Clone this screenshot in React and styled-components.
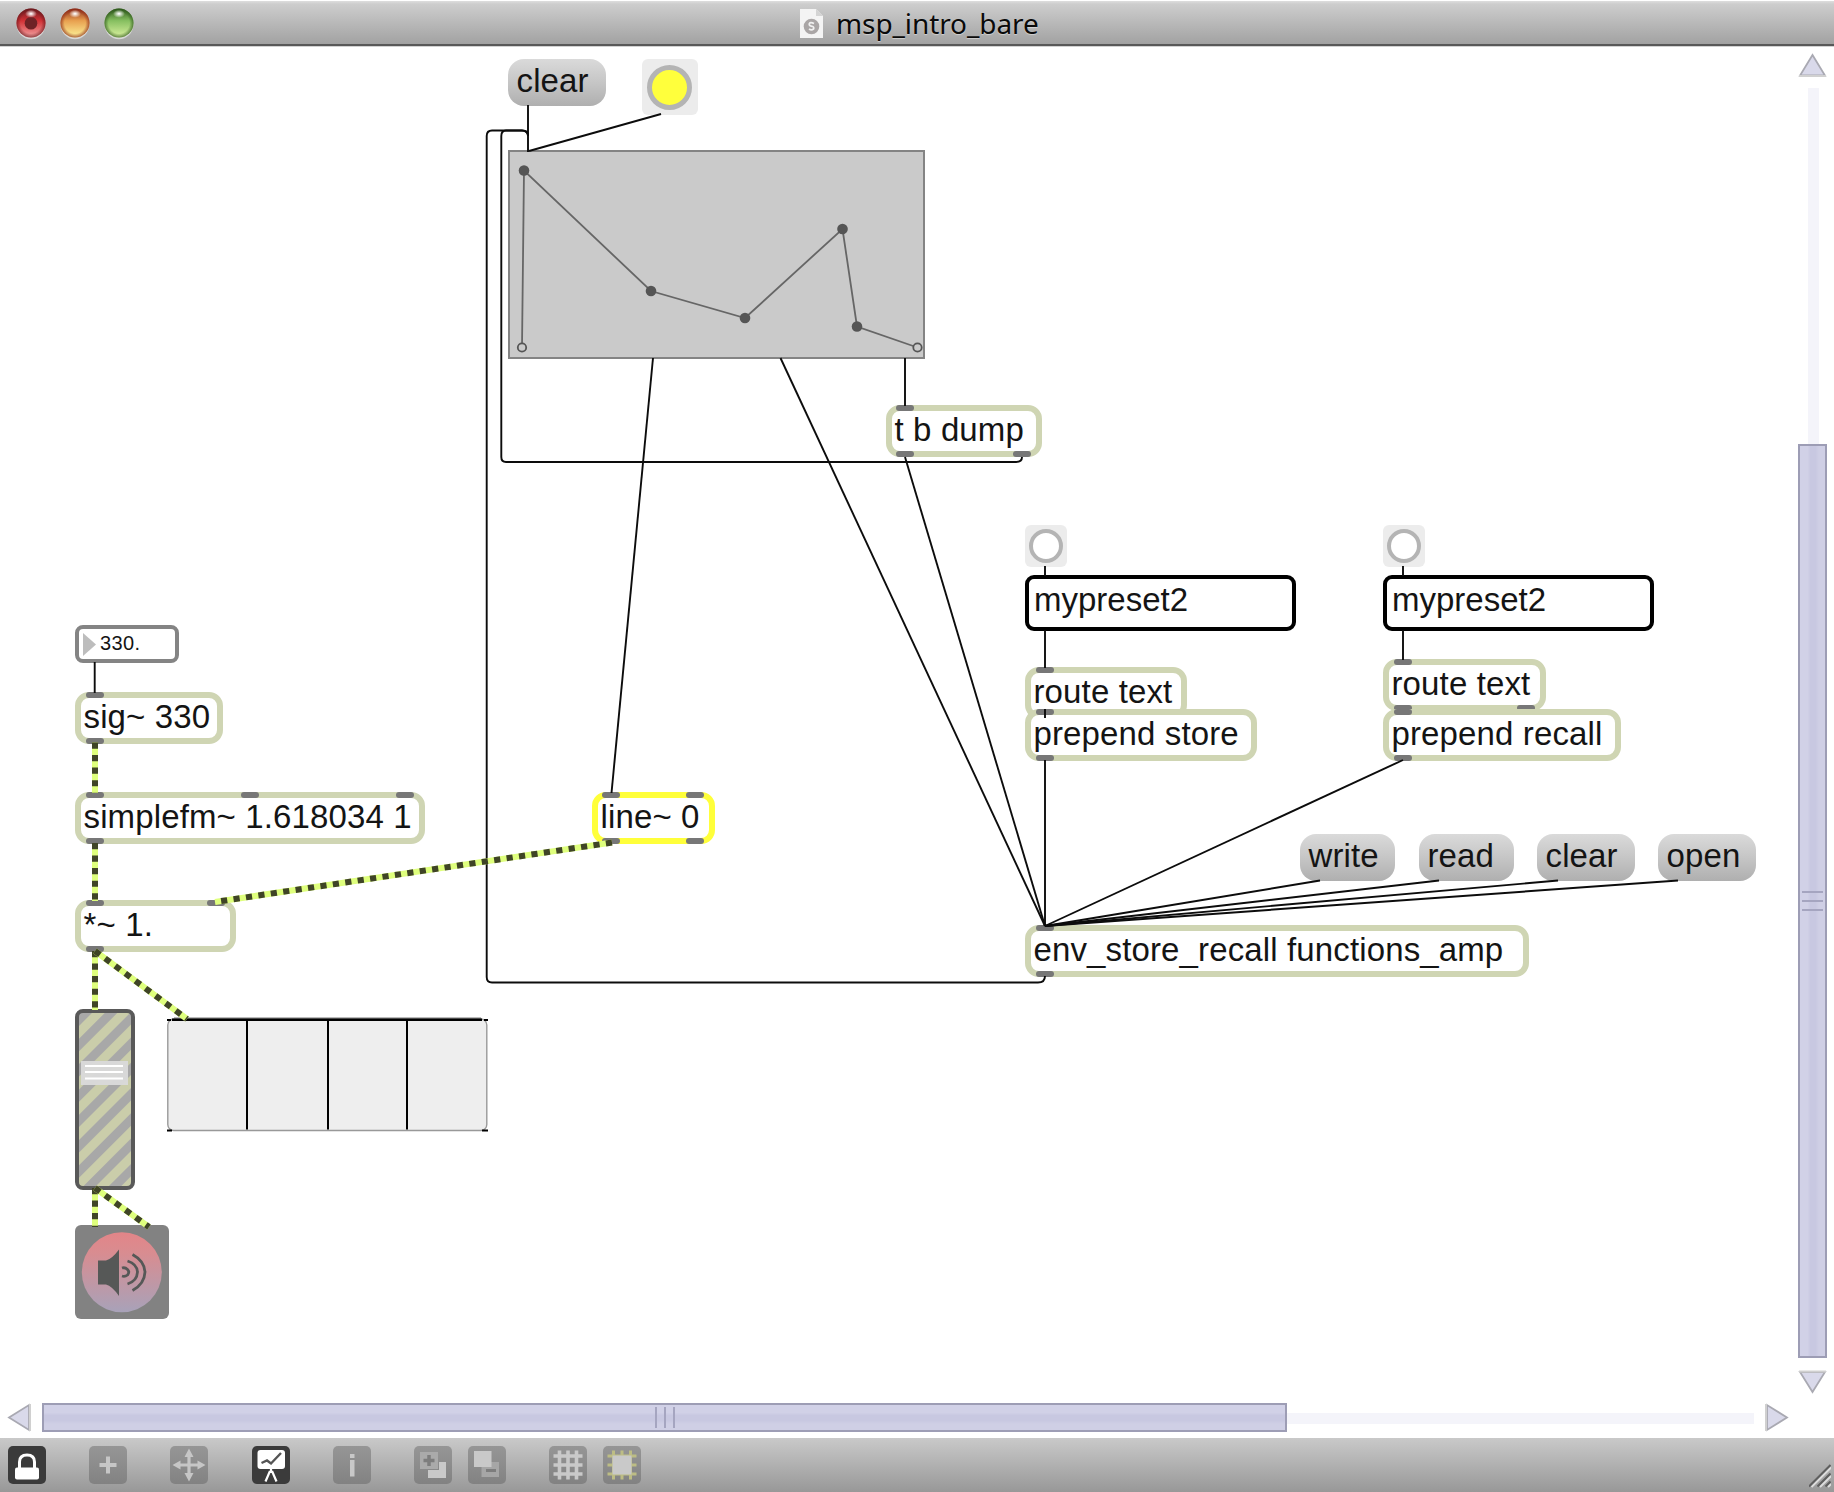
import React from "react";
import styled, { createGlobalStyle, css } from "styled-components";

const GlobalStyle = createGlobalStyle`
  *, *::before { box-sizing: border-box; }
  body { margin: 0; background: #fff; overflow: hidden; }
`;

const sans = `"Liberation Sans", Arial, Helvetica, sans-serif`;

const TITLE_H = 47;
const CANVAS_W = 1791;
const CANVAS_H = 1347;

/* ---------- window chrome ---------- */

const Window = styled.div`
  display: flex;
  flex-direction: column;
  width: 1834px;
  height: 1492px;
  background: #fff;
  font-family: ${sans};
  color: #141414;
`;

const TitleBar = styled.header`
  display: grid;
  grid-template-columns: 800px auto 1fr;
  align-items: start;
  height: ${TITLE_H}px;
  background: linear-gradient(#fff 0 1px, #dedede 1px, #cdcdcd 4px, #a3a3a3 43px, #a0a0a0 44px, #585858 44px 46px, #d2d2d2 46px);
`;

const Lights = styled.div`
  display: flex;
  gap: 14px;
  padding: 8px 0 0 16px;
`;

const Title = styled.div`
  display: flex;
  gap: 13px;
  padding-top: 8px;
`;

const TitleText = styled.span`
  font-family: "Noto Sans", "Open Sans", sans-serif;
  font-size: 28px;
  line-height: 30px;
  letter-spacing: -0.1px;
  color: #0a0a0a;
  text-shadow: 0 1px 1px rgba(255, 255, 255, 0.45);
`;

const Body = styled.div`
  display: flex;
  height: ${CANVAS_H}px;
`;

const Canvas = styled.main`
  position: relative;
  flex: none;
  width: ${CANVAS_W}px;
  height: ${CANVAS_H}px;
`;

const VScroll = styled.div`
  display: flex;
  flex-direction: column;
  align-items: center;
  width: 43px;
  padding-top: 6px;
`;

const VTrack = styled.div`
  display: flex;
  flex-direction: column;
  align-items: center;
  width: 29px;
  height: 1270px;
  margin: 11px 0 12px;
  background: linear-gradient(#f4f4fa, #f4f4fa) 10px 0 / 11px 100% no-repeat;
`;

const HScroll = styled.div`
  display: flex;
  align-items: flex-start;
  height: 44px;
  padding: 9px 0 0 7px;
`;

const HTrack = styled.div`
  display: flex;
  width: 1712px;
  height: 29px;
  margin: 0 11px 0 11px;
  background: linear-gradient(#f4f4fa, #f4f4fa) 0 10px / 100% 11px no-repeat;
`;

const Thumb = styled.div`
  display: flex;
  align-items: center;
  justify-content: center;
  gap: 7px;
  border: 2px solid #9d9db5;
  ${(p) =>
    p.$vertical
      ? css`
          flex-direction: column;
          width: 29px;
          height: 915px;
          margin-top: 356px;
          background: linear-gradient(90deg, #d1d1e7 0 30%, #c8c8e1 42% 62%, #cfcfe5 76%);
        `
      : css`
          width: 1245px;
          height: 29px;
          background: linear-gradient(#d1d1e7 0 30%, #c8c8e1 42% 62%, #cfcfe5 76%);
        `}
`;

const Grip = styled.i`
  background: #a5a5c0;
  ${(p) => (p.$vertical ? "width: 21px; height: 2px;" : "width: 2px; height: 21px;")}
`;

const ToolBar = styled.footer`
  display: flex;
  align-items: flex-start;
  height: 54px;
  padding: 8px 0 0 8px;
  background: linear-gradient(#c9c9c9, #989898);
`;

const ToolButton = styled.div`
  flex: none;
  width: 38px;
  height: 38px;
  margin-right: ${(p) => p.$gap}px;
  border-radius: 5px;
  background: ${(p) => (p.$on ? "#3b3b3b" : "linear-gradient(#969696, #828282)")};
  svg { display: block; }
`;

const Resizer = styled.svg`
  margin: 18px 3px 0 auto;
`;

/* ---------- patcher objects ---------- */

const Node = styled.div`
  position: absolute;
  left: ${(p) => p.$x}px;
  top: ${(p) => p.$y - TITLE_H}px;
  width: ${(p) => p.$w}px;
  height: ${(p) => p.$h}px;
`;

const ObjectNode = styled(Node)`
  border: 6px solid ${(p) => (p.$selected ? "#ffff3a" : "#cfd5b3")};
  border-radius: 14px;
  background: #fff;
  padding-left: 2.5px;
  font-size: 33px;
  line-height: 37px;
  letter-spacing: 0.13px;
  white-space: nowrap;
`;

const Port = styled.i`
  position: absolute;
  left: ${(p) => p.$at}px;
  ${(p) => (p.$out ? "bottom: -6px;" : "top: -6px;")}
  width: 18px;
  height: 6px;
  border-radius: 3px;
  background: #777;
`;

const MessageNode = styled(Node)`
  border-radius: 16px;
  background: linear-gradient(#dadada, #c8c8c8 45%, #afafaf);
  padding-left: 8.5px;
  font-size: 33px;
  line-height: 44px;
  letter-spacing: 0.13px;
  white-space: nowrap;
`;

const TextNode = styled(Node)`
  border: 4px solid #000;
  border-radius: 9px;
  background: #fff;
  padding-left: 5px;
  font-size: 33px;
  line-height: 42px;
`;

const NumberNode = styled(Node)`
  display: flex;
  gap: 4px;
  border: 4px solid #848484;
  border-radius: 8px;
  background: #fff;
  padding: 4px 0 0 4px;
  font-size: 20px;
  line-height: 20px;
  letter-spacing: 0.4px;
`;

const BangNode = styled(Node)`
  display: flex;
  align-items: center;
  justify-content: center;
  border-radius: 6px;
  background: #ececec;
  padding-right: 1px;
  &::before {
    content: "";
    width: ${(p) => p.$d}px;
    height: ${(p) => p.$d}px;
    border: ${(p) => (p.$lit ? 5 : 4)}px solid #b4b4b4;
    border-radius: 50%;
    background: ${(p) => (p.$lit ? "#ffff3c" : "#fff")};
  }
`;

const Drawing = styled.svg`
  display: block;
  position: absolute;
  left: ${(p) => p.$x || 0}px;
  top: ${(p) => (p.$y || TITLE_H) - TITLE_H}px;
`;

/* ---------- data ---------- */

const objects = [
  { text: "t b dump", x: 886, y: 405, w: 156, ins: [10], outs: [10, 127] },
  { text: "sig~ 330", x: 75, y: 692, w: 148, ins: [11], outs: [11] },
  { text: "simplefm~ 1.618034 1", x: 75, y: 792, w: 350, ins: [11, 166, 321], outs: [11] },
  { text: "*~ 1.", x: 75, y: 900, w: 161, ins: [11, 132], outs: [11] },
  { text: "line~ 0", x: 592, y: 792, w: 123, ins: [10, 94], outs: [10, 94], selected: true },
  { text: "route text", x: 1025, y: 667, w: 162, ins: [11], outs: [11] },
  { text: "prepend store", x: 1025, y: 709, w: 232, ins: [11], outs: [11] },
  { text: "route text", x: 1383, y: 659, w: 163, ins: [11], outs: [11, 134] },
  { text: "prepend recall", x: 1383, y: 709, w: 238, ins: [11], outs: [11] },
  { text: "env_store_recall functions_amp", x: 1025, y: 925, w: 504, ins: [11], outs: [11] },
];

const messages = [
  { text: "clear", x: 508, y: 59, w: 98 },
  { text: "write", x: 1300, y: 834, w: 95 },
  { text: "read", x: 1419, y: 834, w: 95 },
  { text: "clear", x: 1537, y: 834, w: 98 },
  { text: "open", x: 1658, y: 834, w: 98 },
];

const cords = [
  "M528 105V152",
  "M661 114L529 151",
  "M653 358L611.5 793",
  "M780.5 358L1045 926",
  "M905 358V406",
  "M905 457L1045 926",
  "M1022 457Q1022 462 1016 462H506Q501.3 462 501.3 457V136Q501.3 130.5 506 130.5H522Q528 130.5 528 136",
  "M1045 976Q1045 982.5 1038 982.5H492Q486.7 982.5 486.7 977V136Q486.7 130.5 492 130.5H522Q528 130.5 528 136",
  "M1045 566V576",
  "M1045 630V668",
  "M1045 709V718",
  "M1045 760V926",
  "M1403 566V576",
  "M1403 630V660",
  "M1403 760L1045 926",
  "M1320 880.5L1045 926",
  "M1439 880.5L1045 926",
  "M1558 880.5L1045 926",
  "M1678 880.5L1045 926",
  "M94.7 662V693",
];

const signals = [
  "M95 742.5V793",
  "M95 843V901",
  "M95 951V1010",
  "M95 951L187 1019",
  "M612 842.5L215 902",
  "M95 1188V1227",
  "M95 1188L149 1227",
];

const envelope = [[522, 347.5], [524, 170.5], [651, 291], [745, 318], [842.5, 229], [857, 326.5], [917.5, 347.5]];

/* ---------- pieces ---------- */

function Light({ id, dark, mid, low, dot }) {
  return (
    <svg width="30" height="32" viewBox="0 0 30 32">
      <defs>
        <linearGradient id={id} x1="0" y1="0" x2="0" y2="1">
          <stop offset="0" stopColor={dark} />
          <stop offset="0.42" stopColor={mid} />
          <stop offset="1" stopColor={low} />
        </linearGradient>
        <radialGradient id={id + "r"}>
          <stop offset="0.72" stopColor={dark} stopOpacity="0" />
          <stop offset="1" stopColor={dark} stopOpacity="0.7" />
        </radialGradient>
        <radialGradient id={id + "h"}>
          <stop offset="0.1" stopColor="#fff" stopOpacity="0.95" />
          <stop offset="1" stopColor="#fff" stopOpacity="0" />
        </radialGradient>
      </defs>
      <circle cx="15" cy="17" r="14.3" fill="#e2e2e2" opacity="0.8" />
      <circle cx="15" cy="15" r="14.5" fill={`url(#${id})`} />
      <circle cx="15" cy="15" r="14.5" fill={`url(#${id}r)`} />
      {dot && <circle cx="15" cy="15.2" r="6.3" fill="#6f2226" />}
      <ellipse cx="15" cy="5.8" rx="6" ry="4" fill={`url(#${id}h)`} />
    </svg>
  );
}

function Arrow({ dir }) {
  const shapes = {
    up: ["29", "24", "M14.5 2L27 22.5H2Z", "M1 23H28"],
    down: ["29", "24", "M14.5 22L27 2H2Z", "M1 1.5H28"],
    left: ["24", "29", "M2 14.5L22 2V27Z", "M23 1V28"],
    right: ["24", "29", "M22 14.5L2 2V27Z", "M1 1V28"],
  };
  const [w, h, d, base] = shapes[dir];
  return (
    <svg width={w} height={h} style={{ flex: "none" }}>
      <path d={d} fill="#d9d9ea" stroke="#a9a9b2" strokeWidth="1.8" />
      <path d={base} stroke="#d0d0d0" strokeWidth="2" />
    </svg>
  );
}

function Tool({ on, gap, children }) {
  return (
    <ToolButton $on={on} $gap={gap}>
      <svg width="38" height="38" viewBox="0 0 38 38" fill="none">{children}</svg>
    </ToolButton>
  );
}

function PatchObject({ text, x, y, w, ins, outs, selected }) {
  return (
    <ObjectNode $x={x} $y={y} $w={w} $h={52} $selected={selected}>
      {text}
      {ins.map((at) => <Port key={"i" + at} $at={at - 6} />)}
      {outs.map((at) => <Port key={"o" + at} $at={at - 6} $out />)}
    </ObjectNode>
  );
}

function FunctionGraph() {
  const last = envelope.length - 1;
  return (
    <Drawing $x={508} $y={150} width="418" height="210" viewBox="508 150 418 210">
      <rect x="509" y="151" width="415" height="207" fill="#cacaca" stroke="#848484" strokeWidth="2" />
      <polyline points={envelope.map((p) => p.join()).join(" ")} fill="none" stroke="#666" strokeWidth="1.8" />
      {envelope.map(([x, y], i) =>
        i === 0 || i === last ? (
          <circle key={i} cx={x} cy={y} r="4.2" fill="#cacaca" stroke="#555" strokeWidth="1.8" />
        ) : (
          <circle key={i} cx={x} cy={y} r="5.3" fill="#555" />
        )
      )}
    </Drawing>
  );
}

function GainSlider() {
  const stripes = Array.from({ length: 9 }, (_, k) => 1222.1 - 25.3 * k);
  return (
    <Drawing $x={75} $y={1009} width="61" height="182" viewBox="75 1009 61 182">
      <clipPath id="gain"><rect x="77" y="1011" width="56" height="177" rx="6" /></clipPath>
      <rect x="77" y="1011" width="56" height="177" rx="6" fill="#cacdaa" />
      <g clipPath="url(#gain)" stroke="#a8a8a8" strokeWidth="8.8">
        {stripes.map((y) => <path key={y} d={`M69 ${y + 10}L149 ${y - 70}`} />)}
      </g>
      <rect x="77" y="1011" width="56" height="177" rx="6" fill="none" stroke="#595959" strokeWidth="4" />
      <rect x="81" y="1061" width="47" height="24" fill="#dadada" opacity="0.96" />
      <path d="M85 1066H123M85 1072H123M85 1078.5H123" stroke="#fff" strokeWidth="2.2" />
    </Drawing>
  );
}

function Scope() {
  return (
    <Drawing $x={166} $y={1017} width="323" height="116" viewBox="166 1017 323 116">
      <rect x="167.8" y="1019" width="319" height="111.5" rx="6" fill="#eee" stroke="#999" strokeWidth="1.4" />
      <path d="M174 1018H481" stroke="#777" strokeWidth="1" />
      <path d="M172 1019.7H482" stroke="#000" strokeWidth="2.4" />
      <path d="M247 1019V1129.5M328 1019V1129.5M407 1019V1129.5" stroke="#000" strokeWidth="2" />
      <path d="M167 1020H171M484 1020H488M167 1130.5H172M482 1130.5H488" stroke="#000" strokeWidth="2" />
    </Drawing>
  );
}

function Dac() {
  return (
    <Drawing $x={75} $y={1225} width="94" height="94" viewBox="75 1225 94 94">
      <linearGradient id="dac" x1="0" y1="0" x2="0" y2="1">
        <stop offset="0" stopColor="#e28588" />
        <stop offset="0.25" stopColor="#d98c90" />
        <stop offset="1" stopColor="#a8a2b9" />
      </linearGradient>
      <rect x="75" y="1225" width="94" height="94" rx="6" fill="#828282" />
      <circle cx="121.8" cy="1272.2" r="40" fill="url(#dac)" />
      <path d="M98 1260.5H106Q112 1259 119 1249.5V1296Q112 1286 106 1284.5H98Z" fill="#565857" />
      <g fill="none" stroke="#565857" strokeWidth="2.8">
        <path d="M122 1268Q125 1267 127.5 1269.5Q130 1272 127.5 1275Q125 1277 122 1276" />
        <path d="M127.5 1261Q137 1264 137.5 1272Q137 1281 127.5 1284" />
        <path d="M132.5 1254.5Q144.5 1261 145 1272Q144.5 1284 132.5 1290.5" />
      </g>
    </Drawing>
  );
}

function Cords() {
  return (
    <Drawing width={CANVAS_W} height={CANVAS_H} viewBox={`0 ${TITLE_H} ${CANVAS_W} ${CANVAS_H}`} fill="none">
      {cords.map((d) => <path key={d} d={d} stroke="#0c0c0c" strokeWidth="1.9" />)}
      {signals.map((d) => (
        <g key={d} strokeWidth="6">
          <path d={d} stroke="#dfff7d" />
          <path d={d} stroke="#3f4426" strokeDasharray="6.2 6.35" />
        </g>
      ))}
    </Drawing>
  );
}

export default function App() {
  return (
    <Window>
      <GlobalStyle />
      <TitleBar>
        <Lights>
          <Light id="close" dark="#6d1a1e" mid="#d23136" low="#f3a3a3" dot />
          <Light id="min" dark="#8d2a18" mid="#e8a04f" low="#fdf49a" />
          <Light id="zoom" dark="#2f5a1c" mid="#86bf60" low="#dcf2a0" />
        </Lights>
        <Title>
          <svg width="23" height="31" viewBox="0 0 23 31">
            <path d="M0 1H16L23 8V30H0Z" fill="#f4f4f4" />
            <path d="M16 1V8H23Z" fill="#d4d4d4" />
            <circle cx="11.5" cy="18.5" r="7.8" fill="#aaa6a6" />
            <path d="M14 15.5Q10 13.5 9.2 16Q9.2 18 12 18.3Q14.5 19 13.5 21Q11.5 22.7 9 21" fill="none" stroke="#f0f0f0" strokeWidth="1.7" />
          </svg>
          <TitleText>msp_intro_bare</TitleText>
        </Title>
      </TitleBar>

      <Body>
        <Canvas>
          {messages.map((m) => (
            <MessageNode key={m.x} $x={m.x} $y={m.y} $w={m.w} $h={47}>{m.text}</MessageNode>
          ))}
          <BangNode $x={642} $y={59} $w={56} $h={56} $d={45} $lit />
          <BangNode $x={1025} $y={525} $w={42} $h={42} $d={34} />
          <BangNode $x={1383} $y={525} $w={42} $h={42} $d={34} />
          <FunctionGraph />
          <TextNode $x={1025} $y={575} $w={271} $h={56}>mypreset2</TextNode>
          <TextNode $x={1383} $y={575} $w={271} $h={56}>mypreset2</TextNode>
          <NumberNode $x={75} $y={625} $w={104} $h={38}>
            <svg width="13" height="24" viewBox="0 0 13 24"><path d="M0 0L13 11.5L0 23Z" fill="#bdbdbd" /></svg>
            330.
          </NumberNode>
          {objects.map((o) => <PatchObject key={o.text + o.x} {...o} />)}
          <GainSlider />
          <Scope />
          <Dac />
          <Cords />
        </Canvas>
        <VScroll>
          <Arrow dir="up" />
          <VTrack>
            <Thumb $vertical><Grip $vertical /><Grip $vertical /><Grip $vertical /></Thumb>
          </VTrack>
          <Arrow dir="down" />
        </VScroll>
      </Body>

      <HScroll>
        <Arrow dir="left" />
        <HTrack>
          <Thumb><Grip /><Grip /><Grip /></Thumb>
        </HTrack>
        <Arrow dir="right" />
      </HScroll>

      <ToolBar>
        <Tool on gap={43}>
          <path d="M11.5 22V16Q11.5 9 19 9Q26.5 9 26.5 16V22" stroke="#fff" strokeWidth="3" />
          <rect x="7" y="21.5" width="24" height="12" rx="2" fill="#fff" />
        </Tool>
        <Tool gap={43}>
          <path d="M19 10.5V27.5M10.5 19H27.5" stroke="#c6c6c6" strokeWidth="4" />
        </Tool>
        <Tool gap={43.5}>
          <path d="M19 6V32M6 19H32" stroke="#c6c6c6" strokeWidth="3.2" />
          <path d="M19 2.5L23.5 11H14.5ZM19 35.5L23.5 27H14.5ZM2.5 19L10.5 14.5V23.5ZM35.5 19L27.5 14.5V23.5Z" fill="#c6c6c6" />
        </Tool>
        <Tool on gap={43}>
          <rect x="5.5" y="4" width="27.5" height="19" rx="3" fill="#fff" />
          <path d="M9.5 17L15 14.5L19 17.5L29 7" stroke="#555" strokeWidth="2.4" />
          <path d="M19 22V27M18 25L13.5 35.5M20 25L24.5 35.5" stroke="#fff" strokeWidth="2.2" />
        </Tool>
        <Tool gap={43}>
          <rect x="17" y="8" width="4.5" height="4" fill="#c8c8c8" />
          <rect x="17" y="14" width="4.5" height="16.5" fill="#c8c8c8" />
        </Tool>
        <Tool gap={16}>
          <rect x="6" y="6" width="18" height="17" fill="#aaa" />
          <path d="M15 9V20M9.5 14.5H20.5" stroke="#7d7d7d" strokeWidth="3.5" />
          <path d="M25 16H32V32H14V24H25Z" fill="#c9c9c9" />
        </Tool>
        <Tool gap={43.5}>
          <rect x="13.5" y="16" width="17.5" height="15" fill="#a6a6a6" />
          <path d="M18 24.5H28" stroke="#7d7d7d" strokeWidth="3" />
          <rect x="6" y="5" width="17.5" height="16" fill="#c9c9c9" />
        </Tool>
        <Tool gap={16}>
          <path d="M10.5 4.5V33.5M19 4.5V33.5M27.5 4.5V33.5M4.5 10H33.5M4.5 19H33.5M4.5 28H33.5" stroke="#c9c9c9" strokeWidth="3.6" />
        </Tool>
        <Tool gap={0}>
          <path d="M10.5 4.5V33.5M19 4.5V33.5M27.5 4.5V33.5M4.5 10H33.5M4.5 19H33.5M4.5 28H33.5" stroke="#bdbd84" strokeWidth="3" />
          <rect x="9.5" y="9.5" width="19" height="19" fill="#c9c9c9" />
        </Tool>
        <Resizer width="22" height="24" viewBox="0 0 22 24" fill="none">
          <path d="M2.5 23L22 3.5M11 23L22 12M19 23L22 20" stroke="#ddd" strokeWidth="2" />
          <path d="M0 22.5L21.5 1M8.5 22.5L21.5 9.5M16.5 22.5L21.5 17.5" stroke="#5f5f5f" strokeWidth="2" />
        </Resizer>
      </ToolBar>
    </Window>
  );
}
